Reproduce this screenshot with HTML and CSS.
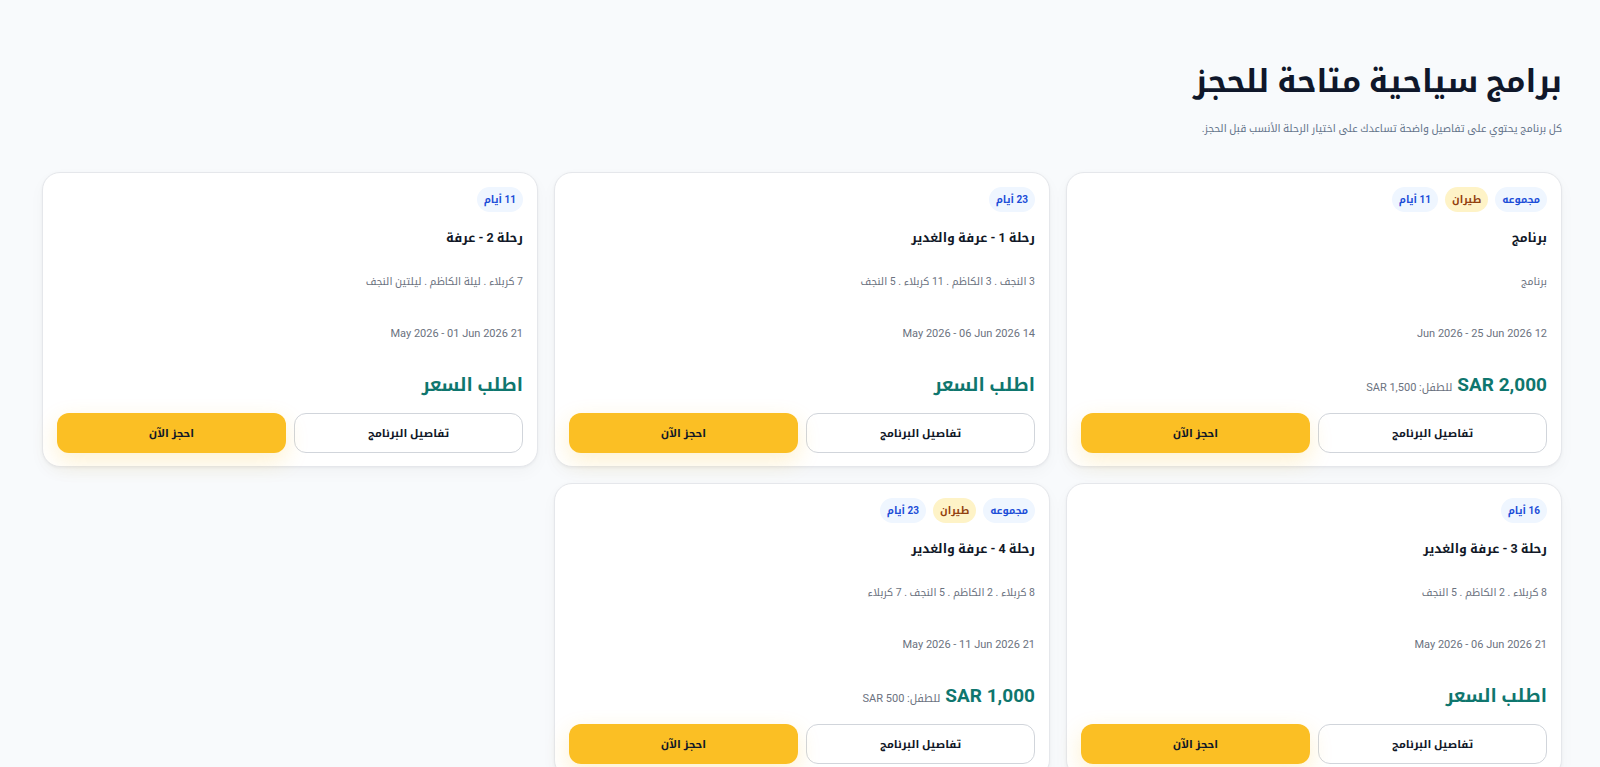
FILE: index.html
```html
<!DOCTYPE html>
<html lang="ar" dir="rtl">
<head>
<meta charset="utf-8">
<title>برامج سياحية متاحة للحجز</title>
<link rel="stylesheet" href="styles.css">
</head>
<body>
<main class="page">
  <header class="intro">
    <h1 class="intro-title">برامج سياحية متاحة للحجز</h1>
    <p class="intro-text">كل برنامج يحتوي على تفاصيل واضحة تساعدك على اختيار الرحلة الأنسب قبل الحجز.</p>
  </header>

  <section class="programs">
    <article class="card">
      <div class="tags">
        <span class="tag tag-blue">مجموعه</span>
        <span class="tag tag-amber">طيران</span>
        <span class="tag tag-blue">11 أيام</span>
      </div>
      <h2 class="card-title">برنامج</h2>
      <p class="card-route">برنامج</p>
      <p class="card-dates">12 Jun 2026 - 25 Jun 2026</p>
      <div class="card-price">
        <span class="price-main">SAR 2,000</span>
        <span class="price-child">للطفل: SAR 1,500</span>
      </div>
      <div class="card-actions">
        <a class="btn btn-outline" href="#">تفاصيل البرنامج</a>
        <a class="btn btn-primary" href="#">احجز الآن</a>
      </div>
    </article>

    <article class="card">
      <div class="tags">
        <span class="tag tag-blue">23 أيام</span>
      </div>
      <h2 class="card-title">رحلة 1 - عرفة والغدير</h2>
      <p class="card-route">3 النجف . 3 الكاظم . 11 كربلاء . 5 النجف</p>
      <p class="card-dates">14 May 2026 - 06 Jun 2026</p>
      <div class="card-price">
        <span class="price-main price-ask">اطلب السعر</span>
      </div>
      <div class="card-actions">
        <a class="btn btn-outline" href="#">تفاصيل البرنامج</a>
        <a class="btn btn-primary" href="#">احجز الآن</a>
      </div>
    </article>

    <article class="card">
      <div class="tags">
        <span class="tag tag-blue">11 أيام</span>
      </div>
      <h2 class="card-title">رحلة 2 - عرفة</h2>
      <p class="card-route">7 كربلاء . ليلة الكاظم . ليلتين النجف</p>
      <p class="card-dates">21 May 2026 - 01 Jun 2026</p>
      <div class="card-price">
        <span class="price-main price-ask">اطلب السعر</span>
      </div>
      <div class="card-actions">
        <a class="btn btn-outline" href="#">تفاصيل البرنامج</a>
        <a class="btn btn-primary" href="#">احجز الآن</a>
      </div>
    </article>

    <article class="card">
      <div class="tags">
        <span class="tag tag-blue">16 أيام</span>
      </div>
      <h2 class="card-title">رحلة 3 - عرفة والغدير</h2>
      <p class="card-route">8 كربلاء . 2 الكاظم . 5 النجف</p>
      <p class="card-dates">21 May 2026 - 06 Jun 2026</p>
      <div class="card-price">
        <span class="price-main price-ask">اطلب السعر</span>
      </div>
      <div class="card-actions">
        <a class="btn btn-outline" href="#">تفاصيل البرنامج</a>
        <a class="btn btn-primary" href="#">احجز الآن</a>
      </div>
    </article>

    <article class="card">
      <div class="tags">
        <span class="tag tag-blue">مجموعه</span>
        <span class="tag tag-amber">طيران</span>
        <span class="tag tag-blue">23 أيام</span>
      </div>
      <h2 class="card-title">رحلة 4 - عرفة والغدير</h2>
      <p class="card-route">8 كربلاء . 2 الكاظم . 5 النجف . 7 كربلاء</p>
      <p class="card-dates">21 May 2026 - 11 Jun 2026</p>
      <div class="card-price">
        <span class="price-main">SAR 1,000</span>
        <span class="price-child">للطفل: SAR 500</span>
      </div>
      <div class="card-actions">
        <a class="btn btn-outline" href="#">تفاصيل البرنامج</a>
        <a class="btn btn-primary" href="#">احجز الآن</a>
      </div>
    </article>
  </section>
</main>
</body>
</html>
```

FILE: styles.css
```css
* {
  box-sizing: border-box;
}

html,
body {
  margin: 0;
  padding: 0;
}

body {
  background: #f8fafc;
  color: #0f172a;
  font-family: Roboto, "Noto Kufi Arabic", "Noto Sans Arabic", "DejaVu Sans", sans-serif;
}

.page {
  padding: 59px 38px 40px 42px;
}

/* Heading block */
.intro-title {
  margin: 0;
  font-size: 31px;
  line-height: 46px;
  font-weight: 700;
  color: #0f172a;
}

.intro-text {
  margin: 14px 0 0;
  font-size: 10.5px;
  line-height: 20px;
  color: #64748b;
}

/* Program grid */
.programs {
  margin-top: 33px;
  display: grid;
  grid-template-columns: repeat(3, 1fr);
  gap: 16px;
}

.card {
  display: flex;
  flex-direction: column;
  background: #ffffff;
  border: 1px solid #e5e7eb;
  border-radius: 18px;
  padding: 14px 14px 13px;
  box-shadow: 0 1px 3px rgba(15, 23, 42, 0.05), 0 6px 16px rgba(15, 23, 42, 0.03);
}

.tags {
  display: flex;
  gap: 7px;
  height: 25px;
}

.tag {
  display: inline-flex;
  align-items: center;
  height: 25px;
  padding: 0 7px;
  border-radius: 999px;
  font-size: 10px;
  font-weight: 700;
}

.tag-blue {
  background: #eff6ff;
  color: #1d4ed8;
}

.tag-amber {
  background: #fef3c7;
  color: #92400e;
}

.card-title {
  margin: 14px 0 0;
  font-size: 12.5px;
  line-height: 24px;
  font-weight: 700;
  color: #111827;
}

.card-route {
  margin: 22px 0 0;
  font-size: 10.5px;
  line-height: 20px;
  color: #6b7280;
}

.card-dates {
  margin: 32px 0 0;
  font-size: 11px;
  line-height: 20px;
  color: #6b7280;
}

.card-price {
  margin-top: 26px;
  display: flex;
  align-items: baseline;
  gap: 5px;
  height: 30px;
}

.price-main {
  font-size: 19px;
  line-height: 30px;
  font-weight: 700;
  color: #0f766e;
}

.price-ask {
  font-size: 18px;
}

.price-child {
  font-size: 11px;
  color: #6b7280;
}

.card-actions {
  margin-top: 13px;
  display: grid;
  grid-template-columns: 1fr 1fr;
  gap: 8px;
}

.btn {
  display: flex;
  align-items: center;
  justify-content: center;
  height: 40px;
  border-radius: 12px;
  font-size: 11px;
  font-weight: 700;
  color: #111827;
  text-decoration: none;
}

.btn-outline {
  background: #ffffff;
  border: 1px solid #d1d5db;
}

.btn-primary {
  background: #fbbf24;
  box-shadow: 0 8px 22px rgba(251, 191, 36, 0.22);
}
```
